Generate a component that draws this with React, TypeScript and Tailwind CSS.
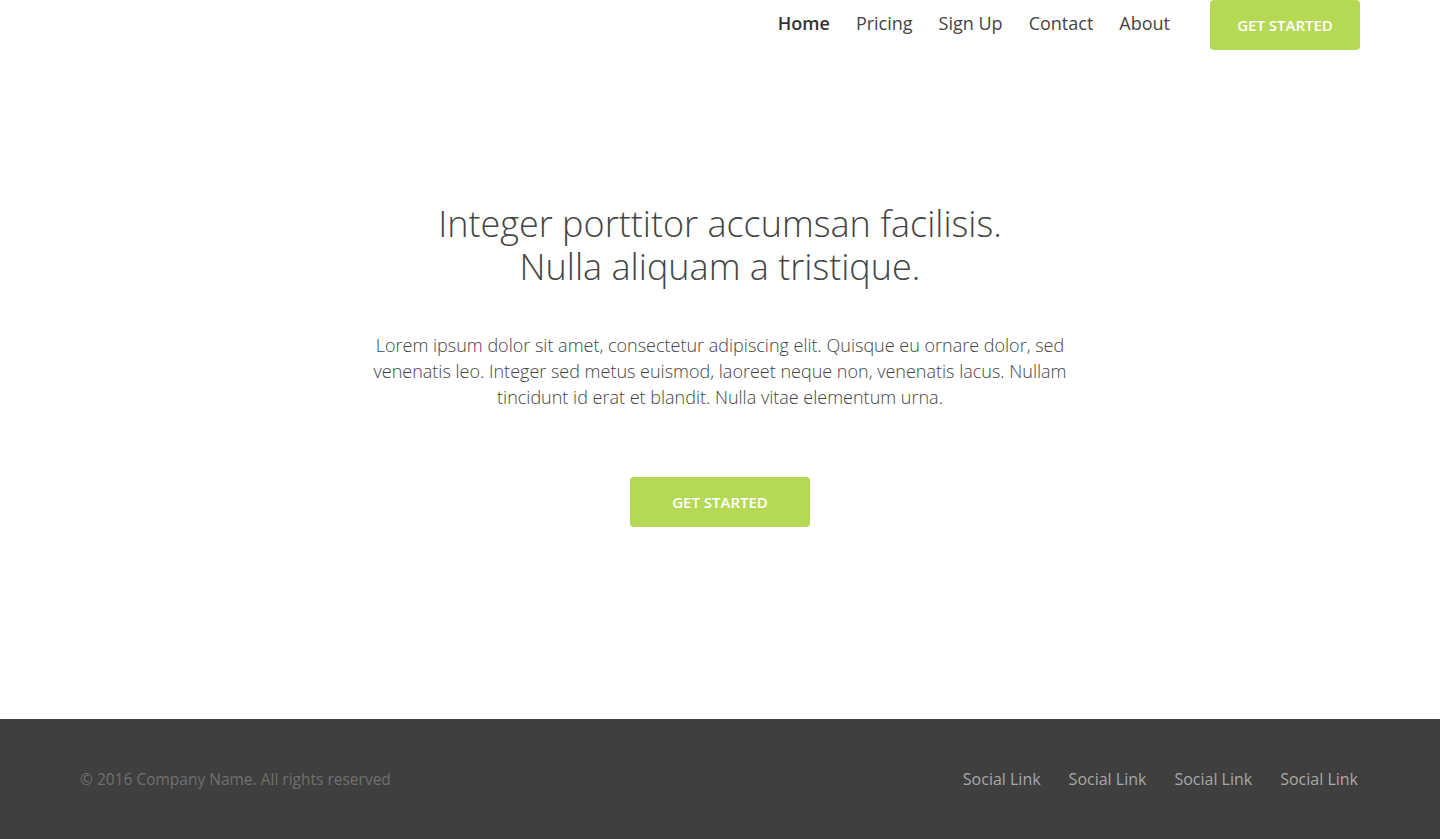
const font = { fontFamily: '"Open Sans", "Noto Sans", sans-serif' };

const navLinks = ["Home", "Pricing", "Sign Up", "Contact", "About"];

export default function App() {
  return (
    <div className="min-h-[839px] flex flex-col bg-white text-[#444]" style={font}>
      <header className="flex justify-end items-start pr-[80px]">
        <nav className="flex items-center gap-[26px] pt-[10px] text-[18px] text-[#444]">
          {navLinks.map((l, i) => (
            <a key={l} href="#" className={i === 0 ? "font-semibold text-[#333]" : ""}>
              {l}
            </a>
          ))}
        </nav>
        <a
          href="#"
          className="ml-[40px] w-[150px] h-[50px] flex items-center justify-center rounded-[4px] bg-[#b5d955] text-white text-[15px] font-semibold uppercase"
        >
          Get Started
        </a>
      </header>

      <main className="flex-1 flex flex-col items-center pt-[152px]">
        <h1 className="text-[36px] font-light leading-[43px] text-center text-[#444]">
          Integer porttitor accumsan facilisis.
          <br />
          Nulla aliquam a tristique.
        </h1>
        <p className="mt-[44px] w-[700px] text-center text-[18px] font-light leading-[26px] text-[#444]">
          Lorem ipsum dolor sit amet, consectetur adipiscing elit. Quisque eu ornare dolor, sed venenatis leo. Integer sed metus euismod, laoreet neque non, venenatis lacus. Nullam tincidunt id erat et blandit. Nulla vitae elementum urna.
        </p>
        <a
          href="#"
          className="mt-[67px] w-[180px] h-[50px] flex items-center justify-center rounded-[4px] bg-[#b5d955] text-white text-[15px] font-semibold uppercase"
        >
          Get Started
        </a>
      </main>

      <footer className="h-[120px] bg-[#3f3f3f] flex items-center justify-between pl-[80px] pr-[82px]">
        <span className="text-[15.5px] text-[#6f6f6f] pt-[2px]">© 2016 Company Name. All rights reserved</span>
        <div className="flex gap-[28px] text-[16px] text-[#a8a8a8]">
          {[1, 2, 3, 4].map((n) => (
            <a key={n} href="#">Social Link</a>
          ))}
        </div>
      </footer>
    </div>
  );
}
